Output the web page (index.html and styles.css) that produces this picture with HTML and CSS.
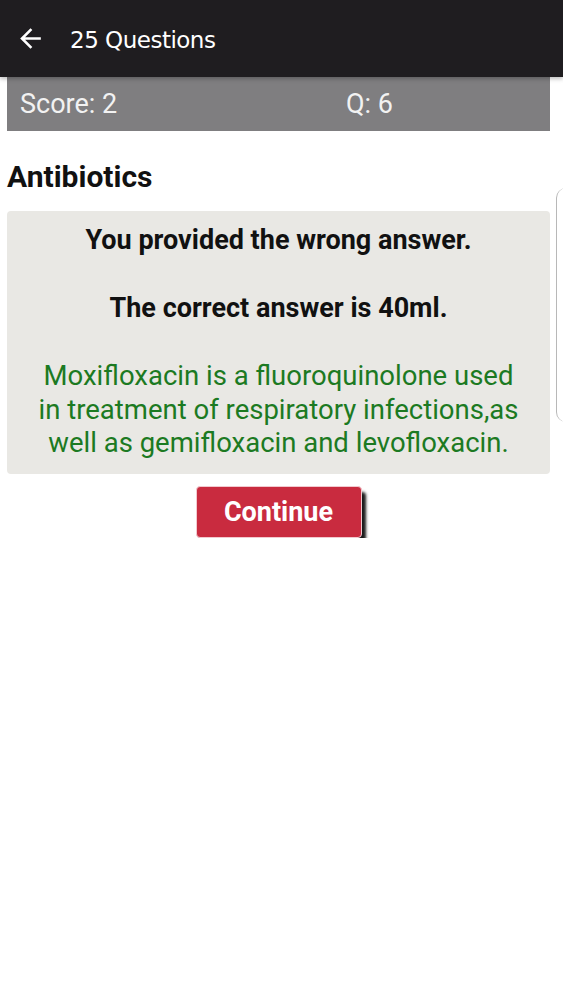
FILE: index.html
```html
<!DOCTYPE html>
<html lang="en">
<head>
  <meta charset="UTF-8">
  <meta name="viewport" content="width=device-width, initial-scale=1.0">
  <title>25 Questions</title>
  <link rel="stylesheet" href="styles.css">
</head>
<body>

  <div class="toolbar">
    <svg class="back" width="24" height="24" viewBox="0 0 24 24">
      <path d="M20 11H7.83l5.59-5.59L12 4l-8 8 8 8 1.41-1.41L7.83 13H20v-2z" fill="#fff"/>
    </svg>
    <span class="toolbar-title">25 Questions</span>
  </div>

  <div class="score-bar">
    <span>Score: 2</span>
    <span>Q: 6</span>
  </div>

  <div class="content">
    <h2 class="category">Antibiotics</h2>

    <div class="result-card">
      <p class="result-line">You provided the wrong answer.</p>
      <p class="result-line second">The correct answer is 40ml.</p>
      <p class="explanation">Moxifloxacin is a fluoroquinolone used in treatment of respiratory infections,as well as gemifloxacin and levofloxacin.</p>
    </div>

    <div class="actions">
      <button class="continue">Continue</button>
    </div>
  </div>

  <div class="edge"></div>

</body>
</html>
```

FILE: styles.css
```css
body {
  margin: 0;
  font-family: Roboto, "Noto Sans", Arial, sans-serif;
  background: #fff;
}

.toolbar {
  height: 77px;
  background-color: #1f1d20;
  display: flex;
  align-items: center;
  padding-left: 15px;
  position: relative;
  z-index: 2;
  box-shadow: 0 2px 4px rgba(0, 0, 0, 0.25);
}

.back {
  width: 31px;
  height: 31px;
  margin-right: 24px;
}

.toolbar-title {
  color: #fff;
  font-family: "DejaVu Sans", sans-serif;
  font-size: 23px;
  letter-spacing: -0.5px;
  margin-top: 2px;
}

.score-bar {
  margin: 0 13px 0 7px;
  height: 54px;
  background-color: #7f7e80;
  display: grid;
  grid-template-columns: 326px 1fr;
  align-items: center;
  padding-left: 13px;
  color: #f2f2f2;
  font-size: 27px;
  font-weight: 400;
}

.content {
  padding: 0 13px 0 7px;
}

.category {
  margin: 30px 0 18px 0;
  font-size: 30px;
  line-height: 32px;
  font-weight: 700;
  color: #111;
}

.result-card {
  background-color: #e9e8e4;
  border-radius: 4px;
  padding: 14px 12px 14px;
  text-align: center;
}

.result-line {
  margin: 0;
  font-size: 27px;
  line-height: 30px;
  font-weight: 700;
  color: #111;
}

.result-line.second {
  margin-top: 38px;
}

.explanation {
  margin: 36px 0 0;
  padding: 0 16px;
  font-size: 27.5px;
  line-height: 33.5px;
  color: #1c7a22;
}

.actions {
  display: flex;
  justify-content: center;
  margin-top: 12px;
}

.continue {
  width: 166px;
  height: 52px;
  background-color: #c92b3f;
  color: #fff;
  font-family: Roboto, Arial, sans-serif;
  font-size: 27px;
  font-weight: 700;
  border: 1px solid #f2c9cf;
  border-radius: 4px;
  box-shadow: 4px 6px 3px rgba(0, 0, 0, 0.9);
  cursor: pointer;
}

.edge {
  position: absolute;
  left: 556px;
  top: 188px;
  width: 10px;
  height: 234px;
  border-left: 1px solid #b8b8b8;
  border-radius: 10px 0 0 10px;
}
```
